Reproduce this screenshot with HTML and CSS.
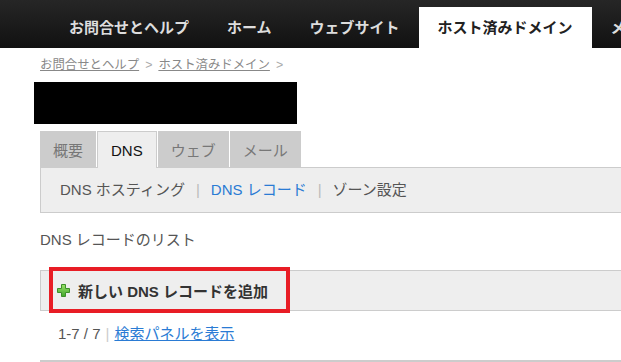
FILE: index.html
```html
<!DOCTYPE html>
<html lang="ja">
<head>
  <meta charset="UTF-8">
  <meta name="viewport" content="width=device-width, initial-scale=1.0">
  <title>DNS レコード</title>
  <link rel="stylesheet" href="styles.css">
</head>
<body>
  <!-- Top navigation -->
  <div class="topnav">
    <a href="#">お問合せとヘルプ</a>
    <a href="#">ホーム</a>
    <a href="#">ウェブサイト</a>
    <a href="#" class="active">ホスト済みドメイン</a>
    <a href="#">メール</a>
  </div>

  <div class="page">
    <div class="breadcrumb">
      <a href="#">お問合せとヘルプ</a><span class="sep">&gt;</span><a href="#">ホスト済みドメイン</a><span class="sep">&gt;</span>
    </div>

    <div class="domain-name"></div>

    <div class="tabs">
      <a href="#" class="tab">概要</a>
      <a href="#" class="tab active">DNS</a>
      <a href="#" class="tab">ウェブ</a>
      <a href="#" class="tab">メール</a>
    </div>
    <div class="subnav">
      <a href="#">DNS ホスティング</a><span class="sep">|</span><a href="#" class="current">DNS レコード</a><span class="sep">|</span><a href="#">ゾーン設定</a>
    </div>

    <h2 class="list-title">DNS レコードのリスト</h2>

    <div class="toolbar">
      <a href="#" class="add-button">
        <svg class="plus" width="13" height="13" viewBox="0 0 13 13">
          <defs>
            <linearGradient id="g" x1="0" y1="0" x2="0" y2="1">
              <stop offset="0" stop-color="#9be26a"/>
              <stop offset="1" stop-color="#3fa62a"/>
            </linearGradient>
          </defs>
          <path d="M4.5 0.5h4v4h4v4h-4v4h-4v-4h-4v-4h4z" fill="url(#g)" stroke="#3d8f2a" stroke-width="1"/>
        </svg>
        新しい DNS レコードを追加
      </a>
    </div>

    <div class="paging">
      1-7 / 7<span class="sep">|</span><a href="#">検索パネルを表示</a>
    </div>
    <div class="table-top"></div>
  </div>
</body>
</html>
```

FILE: styles.css
```css
body {
  margin: 0;
  font-family: "Liberation Sans", "Noto Sans CJK JP", sans-serif;
  font-size: 15px;
  color: #555;
  background: #fff;
  overflow: hidden;
}

/* top navigation */
.topnav {
  height: 48px;
  padding-left: 50px;
  background: linear-gradient(#262626, #111);
  display: flex;
  align-items: flex-end;
  white-space: nowrap;
  overflow: hidden;
}

.topnav a {
  height: 41px;
  line-height: 41px;
  padding: 0 19px;
  color: #ddd;
  font-weight: bold;
  font-size: 15px;
  text-decoration: none;
}

.topnav a.active {
  background: #fff;
  color: #222;
}

.page {
  padding-left: 40px;
  width: 700px;
}

/* breadcrumb */
.breadcrumb {
  margin-top: 9px;
  font-size: 12.4px;
  line-height: 16px;
  color: #aaa;
}

.breadcrumb a {
  color: #888;
}

.breadcrumb .sep {
  margin: 0 6px;
}

.domain-name {
  margin: 9px 0 0 -6px;
  width: 263px;
  height: 42px;
  background: #000;
}

/* tabs */
.tabs {
  display: flex;
  margin-top: 7px;
  height: 36px;
}

.tab {
  box-sizing: border-box;
  height: 36px;
  padding: 4px 13px 0;
  margin-right: 1px;
  line-height: 32px;
  background: #ccc;
  color: #777;
  text-decoration: none;
}

.tab.active {
  position: relative;
  z-index: 1;
  height: 37px;
  background: #eee;
  color: #111;
  border: 1px solid #ccc;
  border-bottom: none;
  padding-top: 3px;
}

.subnav {
  box-sizing: border-box;
  height: 46px;
  padding-left: 19px;
  line-height: 44px;
  background: #eee;
  border: 1px solid #ccc;
  border-right: none;
}

.subnav a {
  color: #555;
  text-decoration: none;
}

.subnav a.current {
  color: #2a7bd4;
}

.subnav .sep {
  color: #bbb;
  margin: 0 11px;
}

.list-title {
  margin: 17px 0 0;
  font-size: 15px;
  font-weight: normal;
  line-height: 20px;
  color: #555;
}

/* toolbar with add button */
.toolbar {
  margin-top: 20px;
  height: 39px;
  background: #eee;
  border: 1px solid #ccc;
  border-right: none;
}

.add-button {
  display: inline-flex;
  align-items: center;
  height: 38px;
  margin-left: 12px;
  padding: 0 18px 0 4px;
  outline: 4px solid #e81d25;
  color: #333;
  font-weight: bold;
  text-decoration: none;
}

.plus {
  margin-right: 8px;
}

.paging {
  margin-top: 13px;
  padding-left: 18px;
  line-height: 20px;
  color: #555;
}

.paging .sep {
  color: #ccc;
  margin: 0 5px;
}

.paging a {
  color: #2a7bd4;
}

.table-top {
  margin-top: 16px;
  height: 3px;
  background: #ccc;
}
```
